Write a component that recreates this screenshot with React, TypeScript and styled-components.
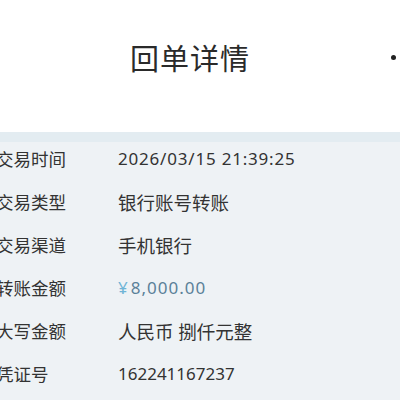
import React from 'react'
import styled, { createGlobalStyle } from 'styled-components'

const Global = createGlobalStyle`
  html, body { margin: 0; padding: 0; }
  body {
    width: 400px;
    height: 400px;
    overflow: hidden;
    background: #eef2f5;
    font-family: "Noto Sans", "Noto Sans CJK SC", sans-serif;
  }
`

const Header = styled.header`
  height: 132px;
  background: #ffffff;
  position: relative;
  display: flex;
  align-items: center;
  justify-content: center;
`

const Title = styled.h1`
  margin: 0 20px 18px 0;
  font-size: 29px;
  font-weight: 400;
  color: #2a2a2a;
  letter-spacing: 1px;
  font-family: "Noto Sans CJK SC", sans-serif;
`

const MoreDot = styled.span`
  position: absolute;
  right: 4px;
  top: 55px;
  width: 5px;
  height: 5px;
  border-radius: 50%;
  background: #222;
`

const List = styled.div`
  background: linear-gradient(#e3ecf1 0, #e3ecf1 10px, #eef2f5 10px);
  padding-top: 5px;
`

const Row = styled.div`
  display: grid;
  grid-template-columns: 118px 1fr;
  align-items: center;
  height: 43px;
`

const Label = styled.span`
  margin-left: -4px;
  font-size: 17.5px;
  color: #333;
  white-space: nowrap;
  font-family: "Noto Sans CJK SC", sans-serif;
`

const Value = styled.span<{ $amount?: boolean; $cjk?: boolean; $spread?: number }>`
  font-size: ${p => (p.$cjk ? '18.5px' : '17px')};
  letter-spacing: ${p => p.$spread ?? 0}px;
  color: ${p => (p.$amount ? '#5b8199' : '#333')};
  white-space: nowrap;
`

const Yen = styled.span`
  color: #6fb4d6;
  margin-right: 2px;
`

type RowData = { label: string; value: React.ReactNode; amount?: boolean; cjk?: boolean; spread?: number }

const rows: RowData[] = [
  { label: '交易时间', value: '2026/03/15 21:39:25', spread: 0.8 },
  { label: '交易类型', value: '银行账号转账', cjk: true },
  { label: '交易渠道', value: '手机银行', cjk: true },
  { label: '转账金额', value: <><Yen>¥</Yen>8,000.00</>, amount: true, spread: 1 },
  { label: '大写金额', value: '人民币 捌仟元整', cjk: true },
  { label: '凭证号', value: '162241167237' },
]

export default function App() {
  return (
    <>
      <Global />
      <Header>
        <Title>回单详情</Title>
        <MoreDot />
      </Header>
      <List>
        {rows.map(r => (
          <Row key={r.label}>
            <Label>{r.label}</Label>
            <Value $amount={r.amount} $cjk={r.cjk} $spread={r.spread}>{r.value}</Value>
          </Row>
        ))}
      </List>
    </>
  )
}
